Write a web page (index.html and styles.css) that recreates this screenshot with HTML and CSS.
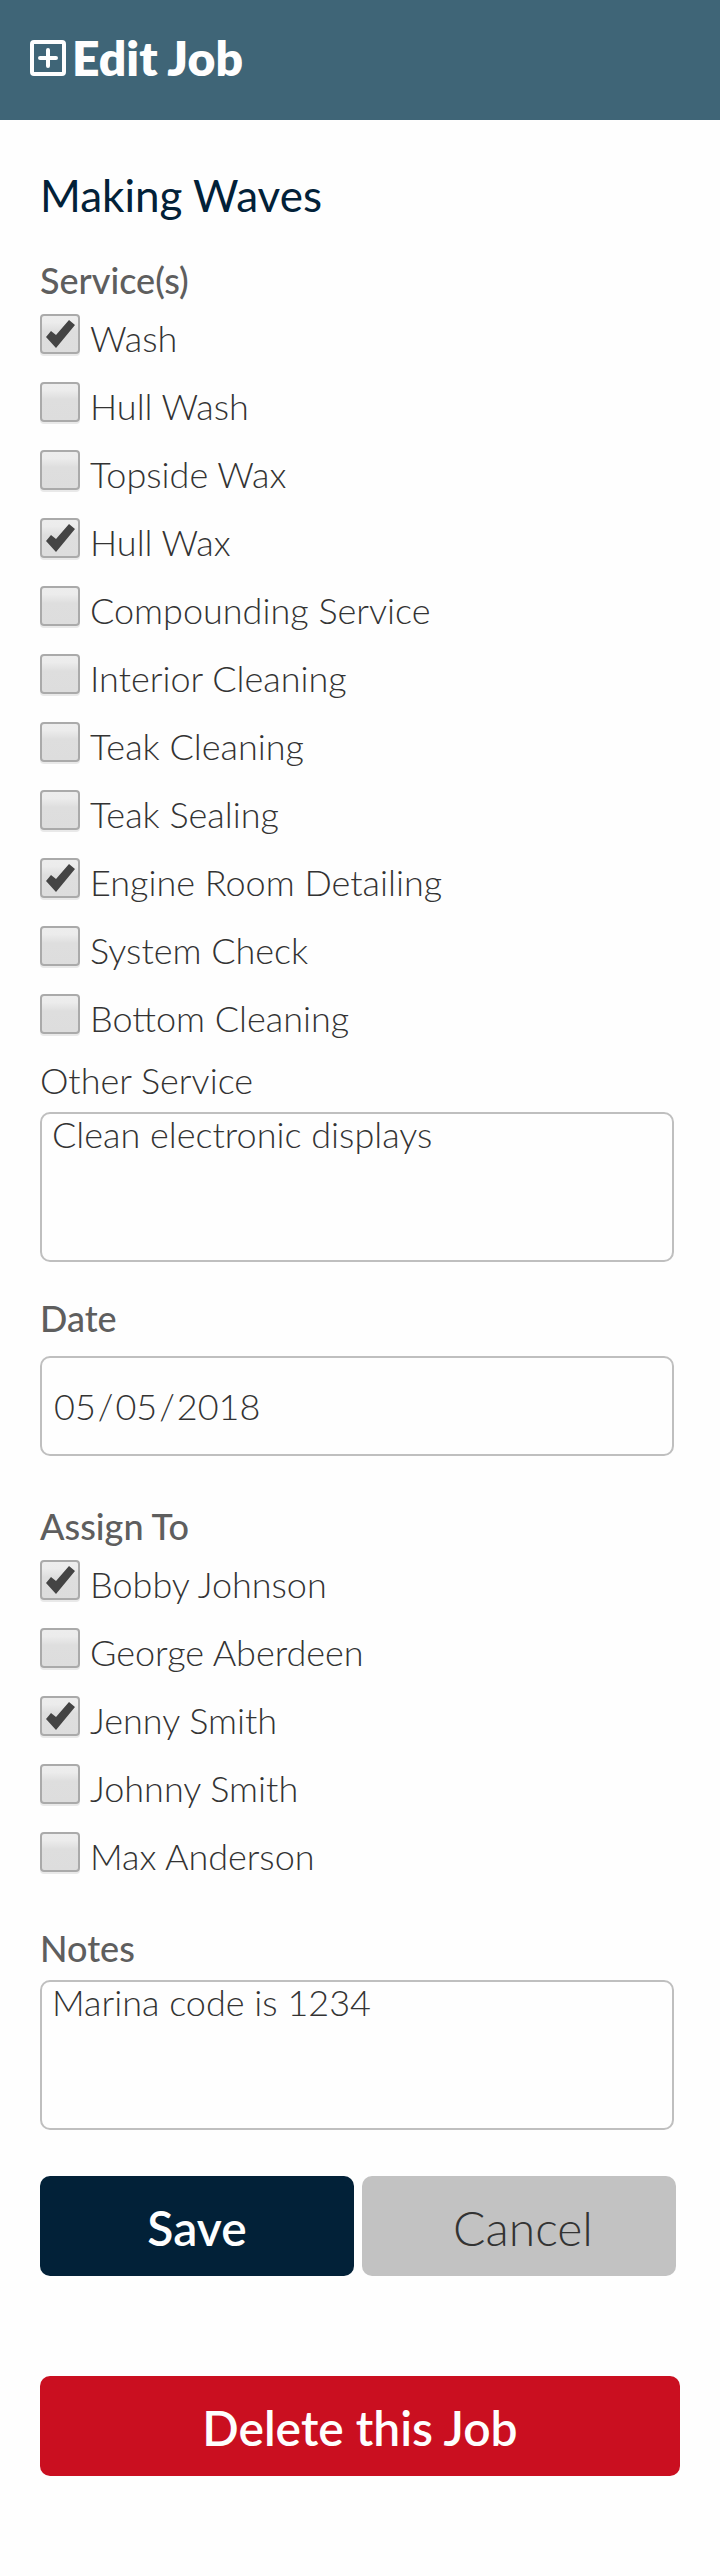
FILE: index.html
```html
<!DOCTYPE html>
<html lang="en-US">
<head>
<meta charset="utf-8">
<meta name="viewport" content="width=device-width, initial-scale=1">
<title>Edit Job</title>
<link rel="stylesheet" href="styles.css">
</head>
<body>
<header class="topbar">
  <svg class="topbar-icon" viewBox="0 0 36 36" aria-hidden="true">
    <rect x="2" y="2" width="32" height="32" rx="2" fill="none" stroke="currentColor" stroke-width="4"/>
    <path d="M18 10v16M10 18h16" fill="none" stroke="currentColor" stroke-width="4" stroke-linecap="round"/>
  </svg>
  <h1 class="topbar-title">Edit Job</h1>
</header>
<main>
  <form class="job-form">
    <h2 class="job-name">Making Waves</h2>

    <fieldset class="group services">
      <legend class="group-label">Service(s)</legend>
      <div class="options">
        <label class="option"><input class="check" type="checkbox" checked>Wash</label>
        <label class="option"><input class="check" type="checkbox">Hull Wash</label>
        <label class="option"><input class="check" type="checkbox">Topside Wax</label>
        <label class="option"><input class="check" type="checkbox" checked>Hull Wax</label>
        <label class="option"><input class="check" type="checkbox">Compounding Service</label>
        <label class="option"><input class="check" type="checkbox">Interior Cleaning</label>
        <label class="option"><input class="check" type="checkbox">Teak Cleaning</label>
        <label class="option"><input class="check" type="checkbox">Teak Sealing</label>
        <label class="option"><input class="check" type="checkbox" checked>Engine Room Detailing</label>
        <label class="option"><input class="check" type="checkbox">System Check</label>
        <label class="option"><input class="check" type="checkbox">Bottom Cleaning</label>
      </div>
    </fieldset>

    <div class="group other">
      <label class="sub-label" for="other">Other Service</label>
      <textarea class="field area" id="other">Clean electronic displays</textarea>
    </div>

    <div class="group date">
      <label class="group-label" for="date">Date</label>
      <input class="field line" id="date" type="date" value="2018-05-05">
    </div>

    <fieldset class="group assign">
      <legend class="group-label">Assign To</legend>
      <div class="options">
        <label class="option"><input class="check" type="checkbox" checked>Bobby Johnson</label>
        <label class="option"><input class="check" type="checkbox">George Aberdeen</label>
        <label class="option"><input class="check" type="checkbox" checked>Jenny Smith</label>
        <label class="option"><input class="check" type="checkbox">Johnny Smith</label>
        <label class="option"><input class="check" type="checkbox">Max Anderson</label>
      </div>
    </fieldset>

    <div class="group notes">
      <label class="group-label" for="notes">Notes</label>
      <textarea class="field area" id="notes">Marina code is 1234</textarea>
    </div>

    <div class="actions">
      <button class="button save" type="submit">Save</button>
      <button class="button cancel" type="button">Cancel</button>
    </div>
    <button class="button delete" type="button">Delete this Job</button>
  </form>
</main>
</body>
</html>
```

FILE: styles.css
```css
* {
  box-sizing: border-box;
}

body {
  margin: 0;
  background: #fefefe;
  color: #333;
  font-family: Lato, "Open Sans", sans-serif;
  font-size: 36px;
  font-weight: 300;
  line-height: 40px;
}

.topbar {
  display: flex;
  align-items: center;
  gap: 6px;
  height: 120px;
  padding: 0 30px 4px;
  background: #3f6577;
  color: #fefefe;
}

.topbar-icon {
  width: 36px;
  height: 36px;
}

.topbar-title {
  margin: 0;
  font-size: 48px;
  font-weight: 800;
  line-height: 60px;
}

.job-form {
  display: flex;
  flex-direction: column;
  padding: 49px 40px 100px;
}

.job-name {
  margin: 0 0 39px;
  color: #022138;
  font-size: 44px;
  font-weight: 400;
  line-height: 52px;
}

.group {
  display: flex;
  flex-direction: column;
  min-width: 0;
  margin: 0;
  padding: 0 6px 0 0;
  border: 0;
}

.group-label {
  padding: 0;
  color: #5e5e5e;
  font-weight: 500;
}

.options {
  display: flex;
  flex-direction: column;
  gap: 20px;
  padding-top: 14px;
}

.option {
  display: flex;
  align-items: flex-start;
  gap: 10px;
  line-height: 48px;
}

.check {
  appearance: none;
  flex: none;
  width: 40px;
  height: 40px;
  margin: 0;
  border: 2px solid #aaa;
  border-radius: 4px;
  background: linear-gradient(#ededed, #ececec 18%, #dedede 42%, #ddd);
  box-shadow: 0 2px 0 #e9e9e9;
}

.check:checked::before {
  content: "";
  display: block;
  width: 36px;
  height: 36px;
  background: #444;
  clip-path: polygon(4px 21px, 9px 15px, 14px 19px, 27px 4px, 33px 9px, 14px 32px);
}

.field {
  width: 100%;
  margin: 0;
  border: 2px solid #bfbfbf;
  border-radius: 10px;
  background: #fefefe;
  color: inherit;
  font: inherit;
}

.area {
  display: block;
  height: 150px;
  margin-top: 12px;
  padding: 0 10px;
  resize: none;
}

.line {
  height: 100px;
  margin-top: 18px;
  padding: 0 11px;
}

.line::-webkit-datetime-edit-text {
  padding: 0 1px;
}

.line::-webkit-calendar-picker-indicator {
  display: none;
}

.other {
  margin-top: 18px;
}

.date {
  margin-top: 36px;
}

.assign {
  margin-top: 50px;
}

.notes {
  margin-top: 48px;
}

.actions {
  display: grid;
  grid-template-columns: 1fr 1fr;
  gap: 8px;
  margin-top: 46px;
  padding-right: 4px;
}

.button {
  height: 100px;
  padding: 4px 0 0;
  border: 0;
  border-radius: 10px;
  color: #fefefe;
  font: inherit;
  font-size: 48px;
  font-weight: 600;
  line-height: 60px;
}

.save {
  background: #022138;
}

.cancel {
  padding-left: 8px;
  background: #c2c2c2;
  color: #333;
  font-weight: 300;
}

.delete {
  margin-top: 100px;
  background: #ca0f20;
}
```
